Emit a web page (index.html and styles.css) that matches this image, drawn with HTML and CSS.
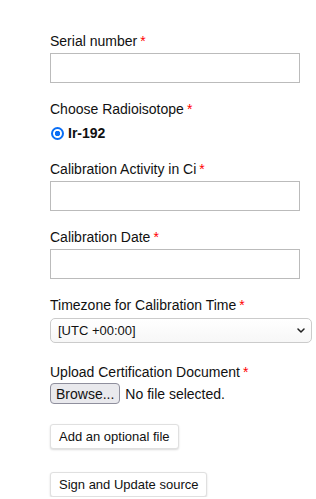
FILE: index.html
```html
<!DOCTYPE html>
<html lang="en">
<head>
    <meta charset="UTF-8">
    <meta name="viewport" content="width=device-width, initial-scale=1.0">
    <title>Update source</title>
    <link rel="stylesheet" href="styles.css">
</head>
<body>
    <form class="source-form">
        <div class="field">
            <label for="serial">Serial number<span class="req">*</span></label>
            <input type="text" id="serial" class="text-input">
        </div>

        <div class="field field-radio">
            <label>Choose Radioisotope<span class="req">*</span></label>
            <div class="radio-row">
                <span class="radio-dot"></span>
                <span class="radio-text">Ir-192</span>
            </div>
        </div>

        <div class="field">
            <label for="activity">Calibration Activity in Ci<span class="req">*</span></label>
            <input type="text" id="activity" class="text-input">
        </div>

        <div class="field">
            <label for="caldate">Calibration Date<span class="req">*</span></label>
            <input type="text" id="caldate" class="text-input">
        </div>

        <div class="field field-select">
            <label for="timezone">Timezone for Calibration Time<span class="req">*</span></label>
            <div class="select-wrap">
                <select id="timezone" class="select-input">
                    <option>[UTC +00:00]</option>
                </select>
                <svg class="chevron" width="8" height="5" viewBox="0 0 8 5">
                    <path d="M1 1 L4 4 L7 1" fill="none" stroke="#222" stroke-width="1.5" stroke-linecap="round" stroke-linejoin="round"/>
                </svg>
            </div>
        </div>

        <div class="field field-upload">
            <label>Upload Certification Document<span class="req">*</span></label>
            <div class="file-row">
                <button type="button" class="browse-btn">Browse...</button>
                <span class="file-name">No file selected.</span>
            </div>
        </div>

        <button type="button" class="plain-btn add-btn">Add an optional file</button>
        <button type="submit" class="plain-btn sign-btn">Sign and Update source</button>
    </form>
</body>
</html>
```

FILE: styles.css
```css
body {
    margin: 0;
    font-family: "Liberation Sans", Arial, sans-serif;
    font-size: 14px;
    color: #111;
    background-color: #fff;
}
.source-form {
    padding: 33px 0 0 50px;
}
.field {
    margin-bottom: 18px;
}
.field label {
    display: block;
    line-height: 17px;
    margin-bottom: 3px;
}
.req {
    color: #f00;
    margin-left: 3px;
}
.text-input {
    display: block;
    width: 250px;
    height: 30px;
    margin: 0;
    padding: 0 6px;
    border: 1px solid #bbb;
    border-radius: 0;
    box-sizing: border-box;
    font: inherit;
}
.field-radio {
    margin-bottom: 19px;
}
.radio-row {
    display: flex;
    align-items: center;
    height: 18px;
    margin-top: 6px;
}
.radio-dot {
    width: 13px;
    height: 13px;
    margin-left: 1px;
    border-radius: 50%;
    box-sizing: border-box;
    border: 2px solid #0a6ef5;
    background: radial-gradient(circle, #0a6ef5 0 2.5px, #fff 3px);
}
.radio-text {
    margin-left: 4px;
    font-weight: bold;
}
.field-select {
    margin-bottom: 21px;
}
.field-select label {
    margin-bottom: 4px;
}
.select-wrap {
    position: relative;
    width: 262px;
}
.select-input {
    display: block;
    width: 100%;
    height: 25px;
    margin: 0;
    padding: 0 20px 0 7px;
    border: 1px solid #cbcbcb;
    border-radius: 5px;
    background: linear-gradient(#fff, #f7f7f7);
    font-family: inherit;
    font-size: 13px;
    color: #111;
    appearance: none;
    -webkit-appearance: none;
}
.chevron {
    position: absolute;
    right: 7px;
    top: 10px;
}
.field-upload {
    margin-bottom: 20px;
}
.field-upload label {
    margin-bottom: 2px;
}
.file-row {
    display: flex;
    align-items: center;
}
.browse-btn {
    height: 21px;
    margin: 0;
    padding: 0 5px;
    border: 1px solid #8f8f9d;
    border-radius: 4px;
    background-color: #e9e9ed;
    font-family: inherit;
    font-size: 14px;
    color: #111;
}
.file-name {
    margin-left: 5px;
}
.plain-btn {
    display: block;
    height: 25px;
    margin: 0;
    padding: 0 8px;
    border: 1px solid #e0e0e0;
    border-radius: 3px;
    background-color: #fff;
    box-shadow: 0 1px 2px rgba(0,0,0,0.15);
    font-family: inherit;
    font-size: 13px;
    color: #111;
    cursor: pointer;
}
.sign-btn {
    margin-top: 23px;
}
```
